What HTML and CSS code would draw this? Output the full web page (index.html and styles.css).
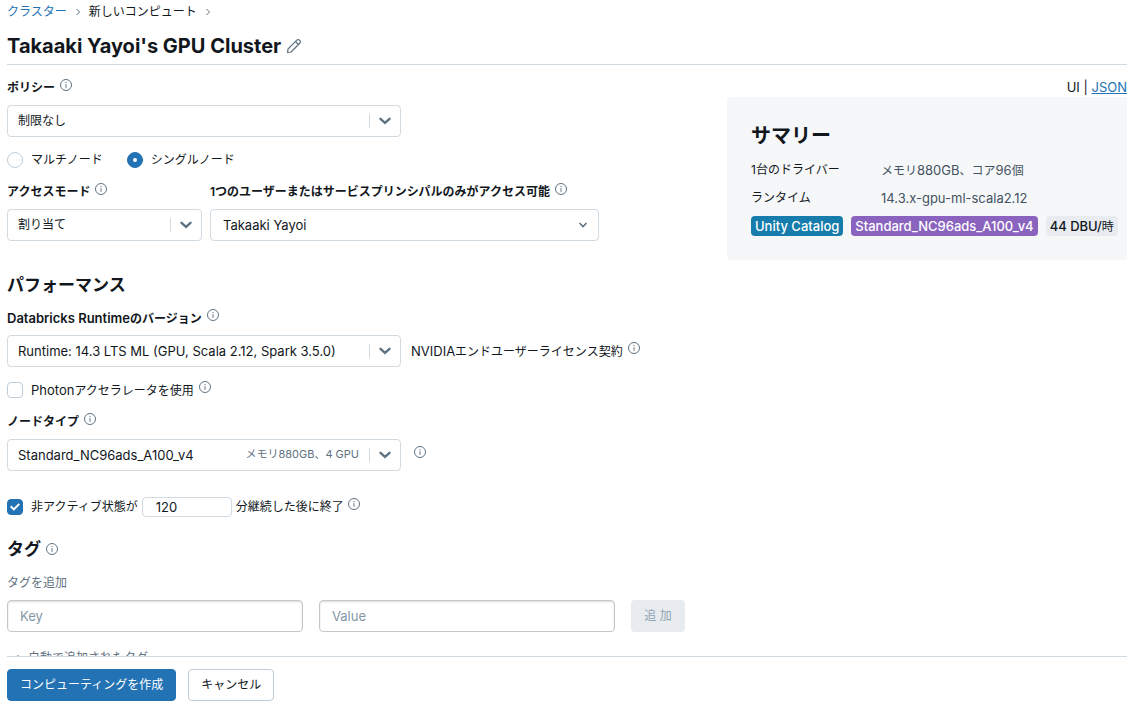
FILE: index.html
```html
<!DOCTYPE html>
<html lang="ja">
<head>
    <meta charset="UTF-8">
    <meta name="viewport" content="width=device-width, initial-scale=1.0">
    <title>新しいコンピュート</title>
    <link rel="stylesheet" href="styles.css">
</head>
<body>
    <svg class="symbols" aria-hidden="true">
        <symbol id="info" viewBox="0 0 12 12">
            <circle cx="6" cy="6" r="5.5" fill="none" stroke="currentColor"/>
            <path d="M6 5.2v3.6" fill="none" stroke="currentColor"/>
            <circle cx="6" cy="3.6" r=".7" fill="currentColor"/>
        </symbol>
        <symbol id="chevron" viewBox="0 0 12 8">
            <path d="M1.5 1.8 6 5.8l4.5-4" fill="none" stroke="currentColor" stroke-width="2.4" stroke-linecap="round"/>
        </symbol>
        <symbol id="chevron-thin" viewBox="0 0 12 8">
            <path d="M2.5 2 6 5.5 9.5 2" fill="none" stroke="currentColor" stroke-width="1.6"/>
        </symbol>
        <symbol id="arrow" viewBox="0 0 6 8">
            <path d="M1.5 1 4.5 4l-3 3" fill="none" stroke="currentColor"/>
        </symbol>
    </svg>

    <div class="page">
        <header>
            <nav class="breadcrumb">
                <a href="#">クラスター</a>
                <svg class="arrow"><use href="#arrow"/></svg>
                <span>新しいコンピュート</span>
                <svg class="arrow"><use href="#arrow"/></svg>
            </nav>
            <div class="title">
                <h1>Takaaki Yayoi's GPU Cluster</h1>
                <button class="edit" aria-label="名前を編集">
                    <svg viewBox="0 0 16 16" fill="none" stroke="currentColor" stroke-width="1.2" stroke-linejoin="round">
                        <path d="M1.5 14.500 2 11 10.800 2.200a1.900 1.900 0 0 1 2.700 0l.3.300a1.900 1.900 0 0 1 0 2.700L5 14z"/>
                        <path d="m9.500 3.500 3 3"/>
                    </svg>
                </button>
            </div>
        </header>

        <main>
            <form class="settings" id="cluster">
                <div class="label">
                    <label for="policy">ポリシー</label>
                    <svg class="info"><use href="#info"/></svg>
                </div>
                <div class="select wide">
                    <select id="policy"><option>制限なし</option></select>
                    <svg class="chevron"><use href="#chevron"/></svg>
                </div>

                <div class="options">
                    <label><input type="radio" name="node"> マルチノード</label>
                    <label><input type="radio" name="node" checked> シングルノード</label>
                </div>

                <div class="access">
                    <div class="access-mode">
                        <div class="label">
                            <label for="mode">アクセスモード</label>
                            <svg class="info"><use href="#info"/></svg>
                        </div>
                        <div class="select">
                            <select id="mode"><option>割り当て</option></select>
                            <svg class="chevron"><use href="#chevron"/></svg>
                        </div>
                    </div>
                    <div class="access-user">
                        <div class="label">
                            <label for="user">1つのユーザーまたはサービスプリンシパルのみがアクセス可能</label>
                            <svg class="info"><use href="#info"/></svg>
                        </div>
                        <div class="select plain">
                            <select id="user" class="latin"><option>Takaaki Yayoi</option></select>
                            <svg class="chevron"><use href="#chevron-thin"/></svg>
                        </div>
                    </div>
                </div>

                <h2 class="performance">パフォーマンス</h2>
                <div class="label">
                    <label for="runtime"><span class="latin">Databricks Runtime</span>のバージョン</label>
                    <svg class="info"><use href="#info"/></svg>
                </div>
                <div class="line">
                    <div class="select wide">
                        <select id="runtime" class="latin"><option>Runtime: 14.3 LTS ML (GPU, Scala 2.12, Spark 3.5.0)</option></select>
                        <svg class="chevron"><use href="#chevron"/></svg>
                    </div>
                    <div class="note">
                        <span><span class="latin">NVIDIA</span>エンドユーザーライセンス契約</span>
                        <svg class="info"><use href="#info"/></svg>
                    </div>
                </div>

                <div class="options photon">
                    <label><input type="checkbox"> <span><span class="latin">Photon</span>アクセラレータを使用</span></label>
                    <svg class="info"><use href="#info"/></svg>
                </div>

                <div class="label">
                    <label for="type">ノードタイプ</label>
                    <svg class="info"><use href="#info"/></svg>
                </div>
                <div class="line">
                    <div class="select wide">
                        <select id="type" class="latin"><option>Standard_NC96ads_A100_v4</option></select>
                        <span class="spec">メモリ880GB、4 GPU</span>
                        <svg class="chevron"><use href="#chevron"/></svg>
                    </div>
                    <div class="note type-note">
                        <svg class="info"><use href="#info"/></svg>
                    </div>
                </div>

                <div class="options terminate">
                    <label><input type="checkbox" checked> 非アクティブ状態が</label>
                    <input type="text" id="minutes" class="minutes latin" value="120">
                    <label for="minutes">分継続した後に終了</label>
                    <svg class="info"><use href="#info"/></svg>
                </div>

                <div class="tag-title">
                    <h2>タグ</h2>
                    <svg class="info"><use href="#info"/></svg>
                </div>
                <p class="tag-text">タグを追加</p>
                <div class="tag-row">
                    <input type="text" class="latin" placeholder="Key" aria-label="Key">
                    <input type="text" class="latin" placeholder="Value" aria-label="Value">
                    <button type="button" disabled>追 加</button>
                </div>
                <div class="auto-tags">
                    <svg class="arrow"><use href="#arrow"/></svg>
                    <span>自動で追加されたタグ</span>
                </div>
            </form>

            <aside>
                <div class="view latin">UI | <a href="#">JSON</a></div>
                <div class="summary">
                    <h2>サマリー</h2>
                    <dl>
                        <dt>1台のドライバー</dt>
                        <dd>メモリ<span class="latin">880GB</span>、コア<span class="latin">96</span>個</dd>
                        <dt>ランタイム</dt>
                        <dd class="latin">14.3.x-gpu-ml-scala2.12</dd>
                    </dl>
                    <div class="badges">
                        <span class="badge teal">Unity Catalog</span>
                        <span class="badge purple">Standard_NC96ads_A100_v4</span>
                        <span class="badge">44 DBU/<span class="unit">時</span></span>
                    </div>
                </div>
            </aside>
        </main>

        <footer>
            <button type="submit" form="cluster" class="btn primary">コンピューティングを作成</button>
            <button type="button" class="btn">キャンセル</button>
        </footer>
    </div>
</body>
</html>
```
FILE: styles.css
```css
* {
    box-sizing: border-box;
}
body {
    margin: 0;
    font-family: Inter, 'Noto Sans CJK JP', sans-serif;
    font-size: 12px;
    line-height: 20px;
    color: #11171c;
    background-color: #fff;
}
h1, h2, p, dl, dd {
    margin: 0;
}
a {
    color: #2272b4;
}
input, select, button {
    font: inherit;
    color: inherit;
    margin: 0;
}
.latin {
    font-size: 13px;
}
.symbols {
    display: none;
}
.page {
    display: flex;
    flex-direction: column;
    height: 100vh;
    padding: 0 8px 0 7px;
}

/* header */
header {
    border-bottom: 1px solid #d1d9e1;
    padding: 2px 0 4px;
}
.breadcrumb {
    display: flex;
    align-items: center;
    gap: 8px;
}
.breadcrumb a {
    text-decoration: none;
}
.arrow {
    width: 6px;
    height: 8px;
    color: #5f7281;
}
.title {
    display: flex;
    align-items: center;
    gap: 5px;
    margin-top: 10px;
}
h1 {
    font-size: 20px;
    font-weight: 700;
    line-height: 28px;
}
.edit {
    display: flex;
    padding: 0;
    border: none;
    background: none;
    color: #5f7281;
}
.edit svg {
    width: 16px;
    height: 16px;
}

/* form */
main {
    flex: 1;
    min-height: 0;
    display: flex;
    justify-content: space-between;
    align-items: flex-start;
    overflow: hidden;
    padding-top: 12px;
}
.settings {
    width: 680px;
}
.info {
    flex: none;
    width: 12px;
    height: 12px;
    margin-top: 2px;
    color: #5f7281;
}
.label, .note {
    display: flex;
    align-items: flex-start;
    gap: 5px;
    line-height: 22px;
}
.label {
    height: 22px;
    margin-bottom: 6px;
    font-weight: 600;
}
.select {
    position: relative;
}
.wide {
    width: 394px;
}
.select select {
    display: block;
    width: 100%;
    height: 32px;
    padding: 0 40px 0 10px;
    border: 1px solid #d1d9e1;
    border-radius: 4px;
    background-color: #fff;
    appearance: none;
}
.select::after {
    content: "";
    position: absolute;
    top: 9px;
    right: 31px;
    width: 1px;
    height: 14px;
    background-color: #d1d9e1;
}
.chevron {
    position: absolute;
    top: 12px;
    right: 10px;
    width: 12px;
    height: 8px;
    color: #5f7281;
    pointer-events: none;
}
.select.plain::after {
    display: none;
}
.select.plain select {
    padding-left: 12px;
}
.spec {
    position: absolute;
    top: 5px;
    right: 42px;
    font-size: 11px;
    color: #5f7281;
}
.options {
    display: flex;
    gap: 24px;
    height: 22px;
    margin: 12px 0 10px;
    line-height: 22px;
}
.options label {
    display: flex;
    align-items: center;
    gap: 8px;
}
input[type=radio], input[type=checkbox] {
    display: grid;
    place-content: center;
    width: 16px;
    height: 16px;
    border: 1px solid #c0cdd8;
    border-radius: 4px;
    background-color: #fff;
    appearance: none;
}
input[type=radio] {
    border-radius: 50%;
}
input[type=radio]:checked, input[type=checkbox]:checked {
    border-color: #2272b4;
    background-color: #2272b4;
}
input[type=radio]:checked::after {
    content: "";
    width: 4px;
    height: 4px;
    border-radius: 50%;
    background-color: #fff;
}
input[type=checkbox]:checked::after {
    content: "";
    width: 10px;
    height: 8px;
    background-color: #fff;
    clip-path: polygon(0 50%, 14% 32%, 38% 62%, 86% 4%, 100% 20%, 39% 98%);
}
.access {
    display: flex;
    gap: 8px;
}
.access-mode {
    width: 195px;
}
.access-user {
    width: 389px;
}
h2 {
    font-size: 17px;
    font-weight: 600;
    line-height: 28px;
}
.performance {
    margin: 30px 0 8px;
}
.line {
    display: flex;
    gap: 10px;
}
.note {
    padding-top: 5px;
}
.type-note {
    padding-left: 3px;
}
.photon {
    gap: 5px;
}
.terminate {
    gap: 4px;
    margin: 25px 0 17px;
}
.minutes {
    width: 90px;
    height: 20px;
    margin-top: 1px;
    padding: 0 13px;
    border: 1px solid #d1d9e1;
    border-radius: 4px;
}
.tag-title {
    display: flex;
    align-items: center;
    gap: 5px;
}
.tag-title .info {
    margin-top: 0;
}
.tag-text {
    margin: 10px 0 7px;
    color: #5f7281;
}
.tag-row {
    display: flex;
    gap: 16px;
}
.tag-row input {
    width: 296px;
    height: 32px;
    padding: 0 12px;
    border: 1px solid #c4c8cc;
    border-radius: 4px;
    box-shadow: inset 0 1px 2px rgba(0, 0, 0, 0.15);
}
.tag-row input::placeholder {
    color: #8396a5;
}
.tag-row button {
    width: 54px;
    height: 32px;
    padding: 0;
    border: none;
    border-radius: 4px;
    background-color: #e8ecf0;
    color: #92a4b3;
}
.auto-tags {
    display: flex;
    align-items: center;
    gap: 6px;
    padding: 16px 0 0 9px;
    color: #5f7281;
}

/* summary */
aside {
    width: 400px;
}
.view {
    text-align: right;
}
.summary {
    padding: 24px;
    border-radius: 4px 0 0 4px;
    background-color: #f6f7f9;
}
.summary h2 {
    font-size: 20px;
    line-height: 30px;
}
dl {
    display: grid;
    grid-template-columns: 130px 1fr;
    grid-auto-rows: 20px;
    row-gap: 8px;
    margin: 9px 0 8px;
}
dd {
    color: #44535f;
}
.badges {
    display: flex;
    gap: 8px;
}
.badge {
    height: 20px;
    padding: 0 4px;
    border-radius: 4px;
    background-color: #e8ecf0;
    font-size: 13px;
    font-weight: 500;
    white-space: nowrap;
}
.unit {
    font-size: 12px;
    font-weight: 400;
}
.teal {
    background-color: #157cac;
    color: #fff;
}
.purple {
    background-color: #8a63bf;
    color: #fff;
}

/* footer */
footer {
    display: flex;
    gap: 12px;
    padding: 12px 0 4px;
    border-top: 1px solid #d1d9e1;
}
.btn {
    height: 32px;
    padding: 0 12px;
    border: 1px solid #c0cdd8;
    border-radius: 4px;
    background-color: #fff;
}
.primary {
    border-color: #2272b4;
    background-color: #2272b4;
    color: #fff;
}
```
